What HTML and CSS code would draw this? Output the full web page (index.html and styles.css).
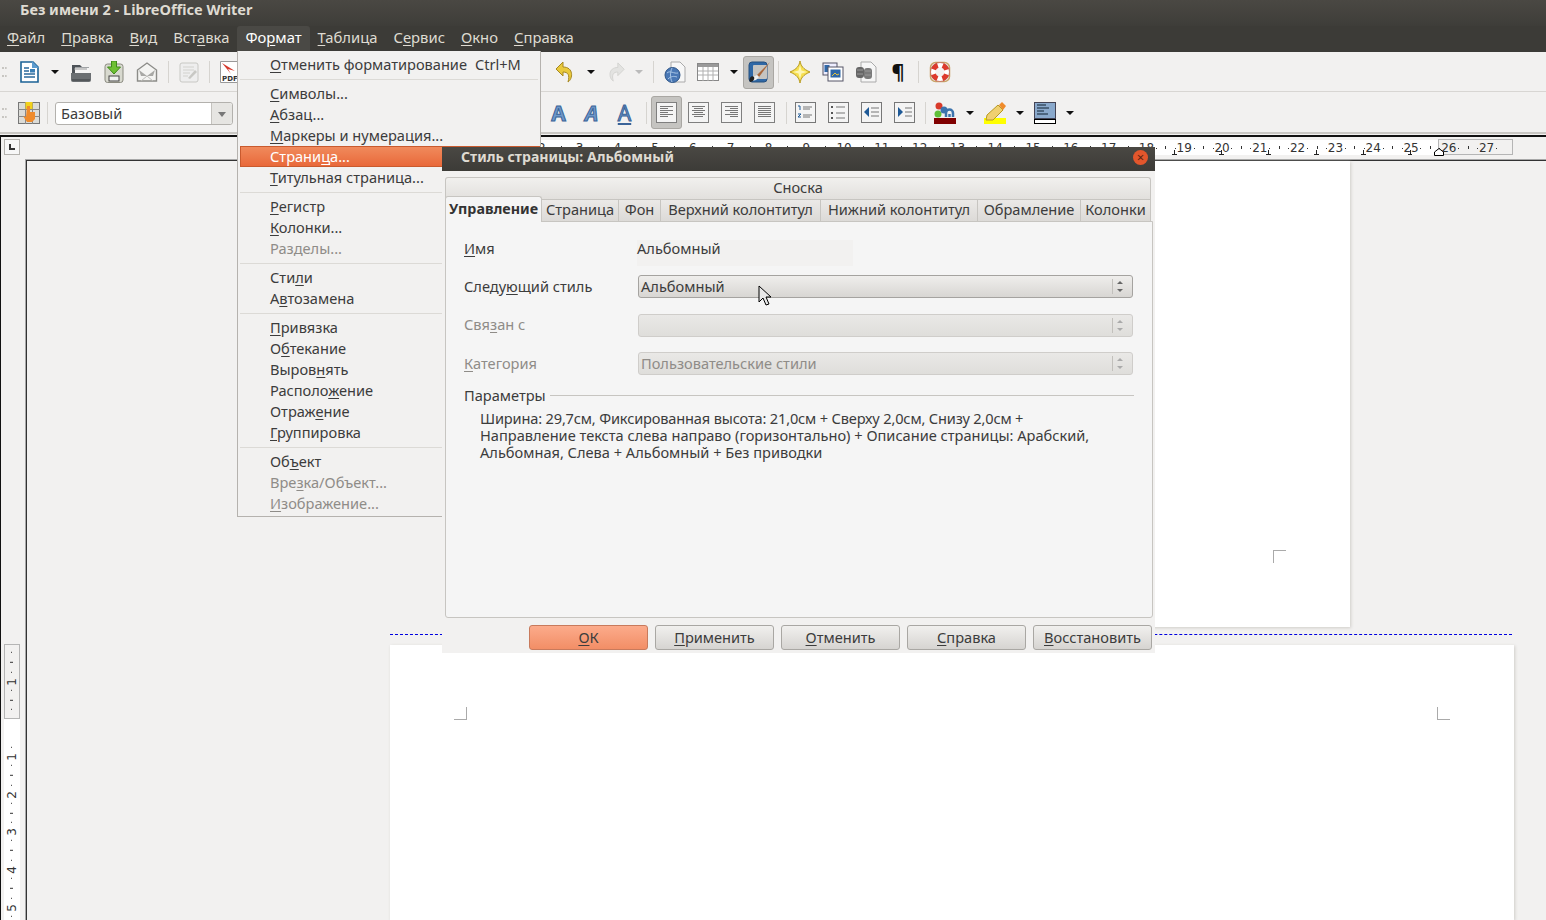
FILE: index.html
```html
<!DOCTYPE html>
<html>
    <head>
        <title>Без имени 2 - LibreOffice Writer</title>
        <link rel="stylesheet" href="styles.css">
    </head>
    <body>
        <div class="titlebar">Без имени 2 - LibreOffice Writer</div>
        <div class="menubar">
            <span class="menu-item"><u>Ф</u>айл</span>
            <span class="menu-item"><u>П</u>равка</span>
            <span class="menu-item"><u>В</u>ид</span>
            <span class="menu-item">Вст<u>а</u>вка</span>
            <span class="menu-item menu-open">Фо<u>р</u>мат</span>
            <span class="menu-item"><u>Т</u>аблица</span>
            <span class="menu-item">С<u>е</u>рвис</span>
            <span class="menu-item"><u>О</u>кно</span>
            <span class="menu-item"><u>С</u>правка</span>
        </div>

        <div class="toolbar toolbar-top">
            <span class="grip"></span>
            <svg class="ic" viewBox="0 0 22 22"><path d="M3 1h12l5 5v15H3z" fill="#fff" stroke="#1c6396" stroke-width="1.6"/><path d="M14 0l7 7h-7z" fill="#5d9ccf"/><path d="M6 7h5M6 10h5M6 13h11M6 16h11" stroke="#2a6a9c" stroke-width="1.4"/><rect x="12" y="8" width="5" height="3.5" fill="#3a7fb5"/></svg>
            <span class="drop"></span>
            <svg class="ic" viewBox="0 0 22 22"><path d="M2 4h8l2 2h7v7H2z" fill="#4d5257"/><rect x="5" y="6.500" width="14" height="6" fill="#f4f4f4"/><path d="M4 8h13" stroke="#999"/><path d="M1 12h20v7a2 2 0 0 1-2 2H3a2 2 0 0 1-2-2z" fill="#6b6f72"/><path d="M2 19h18" stroke="#3d4043"/></svg>
            <svg class="ic" viewBox="0 0 22 22"><rect x="2" y="3" width="18" height="18.500" rx="2.500" fill="#d8d9cf" stroke="#8b8b80"/><rect x="6" y="15" width="10" height="5" fill="#f2f2f2" stroke="#444"/><path d="M8.500 0h5v6h4l-6.500 7-6.500-7h4z" fill="#6ec034" stroke="#3f8a1b"/></svg>
            <svg class="ic" viewBox="0 0 22 22"><path d="M1.500 9L11 2l9.500 7v11h-19z" fill="#f4f4f2" stroke="#8c8c88" stroke-width="1.4"/><path d="M3 9l8 6 8-6-2 6H5z" fill="#a9a9a6"/><path d="M5 20l6-5 6 5" fill="none" stroke="#bdbdba"/></svg>
            <span class="sep"></span>
            <svg class="ic ic-faded" viewBox="0 0 20 22"><rect x="1" y="2" width="18" height="19" rx="2" fill="#eee" stroke="#c4c4c0"/><path d="M4 6h11M4 9h11M4 12h7M4 15h5" stroke="#d0d0cc"/><path d="M9 17l7-8 2 2-7 7z" fill="#c4c4c0"/></svg>
            <span class="sep"></span>
            <svg class="ic" viewBox="0 0 22 22"><path d="M.5.5h21v21H.5z" fill="#fff" stroke="#999"/><path d="M2 2l13 8-7-2 3 5z" fill="#d63a2e"/><text class="pdf-label" x="2" y="20">PDF</text></svg>
        </div>
        <div class="toolbar toolbar-top toolbar-right">
            <svg class="ic" viewBox="0 0 22 22"><path d="M9 1L2 8l7 7v-4c5 0 7 3 5 10 5-3 6-15-5-15z" fill="#e9c93c" stroke="#a58720"/></svg>
            <span class="drop"></span>
            <svg class="ic ic-faded" viewBox="0 0 22 22"><path d="M13 1l7 7-7 7v-4c-5 0-7 3-5 10-5-3-6-15 5-15z" fill="#e2e2e0" stroke="#cfcfcc"/></svg>
            <span class="drop drop-off"></span>
            <span class="sep"></span>
            <svg class="ic" viewBox="0 0 22 22"><path d="M7 1h9l5 5v15H7z" fill="#f7f7f7" stroke="#aaa"/><circle cx="8.500" cy="14" r="7.500" fill="#4a78b5" stroke="#2f5688"/><path d="M3 12c3-3 7 1 11 0M4 18c3-3 6-3 9-2M8 7c-2 4-2 10 0 14" stroke="#a9c6e6" fill="none"/></svg>
            <svg class="ic" viewBox="0 0 22 18"><rect x=".5" y=".5" width="21" height="17" fill="#fff" stroke="#888"/><rect x="1" y="1" width="20" height="3" fill="#9a9a9a"/><path d="M1 8h20M1 12h20M6 4v14M11 4v14M16 4v14" stroke="#b0b0b0"/></svg>
            <span class="drop"></span>
            <span class="ic-pressed"><svg class="ic" viewBox="0 0 22 22"><rect x="1" y="1" width="18" height="20" rx="3" fill="#2f68a6" stroke="#27507f"/><rect x="5" y="4" width="14" height="14" rx="1" fill="#c5c4c1"/><path d="M22 1L9 14l2 2z" fill="#a9683c"/><path d="M9 14l2 2-3 3-4 1 1-4z" fill="#eee"/><path d="M2 21c-2-4 2-7 4-5 1 2-1 5-4 5z" fill="#222"/></svg></span>
            <span class="sep"></span>
            <svg class="ic" viewBox="0 0 22 22"><path d="M11 0c1 5 3 8 10 11-7 3-9 6-10 11-1-5-3-8-10-11 7-3 9-6 10-11z" fill="#f6df4e" stroke="#b79a22"/><path d="M11 4l1.500 5.500L18 11l-5.500 1.500L11 18l-1.500-5.500L4 11l5.500-1.500z" fill="#fdf6b4"/></svg>
            <svg class="ic" viewBox="0 0 22 22"><rect x="1" y="2" width="14" height="12" fill="#eef" stroke="#556"/><rect x="2.500" y="4" width="5" height="7" fill="#2f68a8"/><rect x="6" y="6" width="15" height="14" fill="#fff" stroke="#556"/><rect x="8.500" y="8.500" width="10" height="8" fill="#2f68a8"/><path d="M10 15l3-3 2 2 2-1" stroke="#e8c53a" fill="none"/></svg>
            <svg class="ic" viewBox="0 0 22 22"><path d="M6 1h10l5 5v15H6z" fill="#f6f6f6" stroke="#aaa"/><rect x="1" y="6" width="8" height="11" rx="3" fill="#666"/><rect x="9" y="7" width="8" height="11" rx="3" fill="#7a7a7a"/><path d="M2 9h6M10 10h6M2 13h6M10 14h6" stroke="#999"/></svg>
            <span class="pilcrow">¶</span>
            <span class="sep"></span>
            <svg class="ic" viewBox="0 0 22 22"><rect x="1.500" y="1.500" width="19" height="19" rx="5" fill="none" stroke="#c9a468" stroke-width="1.5"/><circle cx="11" cy="11" r="7" fill="none" stroke="#fff" stroke-width="5"/><circle class="buoy-bands" cx="11" cy="11" r="7"/><circle cx="11" cy="11" r="9.500" fill="none" stroke="#b8423a" stroke-width=".6"/></svg>
        </div>

        <div class="toolbar toolbar-second">
            <span class="grip grip-low"></span>
            <svg class="ic" viewBox="0 0 22 22"><rect x=".5" y=".5" width="21" height="21" fill="#dcdcd8" stroke="#777"/><path d="M7.500 0v22M14.500 0v22M0 7.500h22M0 14.500h22" stroke="#888"/><rect x="7.500" y="0" width="7" height="7" fill="#f2d21c"/><path d="M9 4h3v6h5v7l-3 3H9l-4-6 3 1z" fill="#ef8b2c"/></svg>
            <span class="sep"></span>
            <div class="style-combo"><span class="style-value">Базовый</span><span class="style-arrow"></span></div>
        </div>
        <div class="toolbar toolbar-second toolbar-format">
            <span class="letter-a">A</span>
            <span class="letter-a letter-i">A</span>
            <span class="letter-a letter-u">A</span>
            <span class="sep"></span>
            <span class="ic-pressed pressed-align"><span class="align a-left"><i></i><i></i><i></i><i></i><i></i><i></i></span></span>
            <span class="align a-center"><i></i><i></i><i></i><i></i><i></i><i></i></span>
            <span class="align a-right"><i></i><i></i><i></i><i></i><i></i><i></i></span>
            <span class="align a-full"><i></i><i></i><i></i><i></i><i></i><i></i></span>
            <span class="sep sep-tight"></span>
            <svg class="ic ic-box" viewBox="0 0 21 21"><rect x=".5" y=".5" width="20" height="20" fill="#f4f4f4" stroke="#777"/><path d="M3 4h2v4M3 12h3l-3 3h3" fill="none" stroke="#1f5a97"/><path d="M8 5h9M8 7h7M8 13h9M8 15h7" stroke="#777"/></svg>
            <svg class="ic ic-box" viewBox="0 0 21 21"><rect x=".5" y=".5" width="20" height="20" fill="#f4f4f4" stroke="#777"/><path d="M3 4h2v2H3zM3 10h2v2H3zM3 15h2v2H3z" fill="#555"/><path d="M8 5h9M8 11h9M8 16h9" stroke="#777"/></svg>
            <svg class="ic ic-box" viewBox="0 0 21 21"><rect x=".5" y=".5" width="20" height="20" fill="#f4f4f4" stroke="#777"/><path d="M3 10l5-5v10z" fill="#1f5a97"/><path d="M10 6h8M10 10h8M10 14h8" stroke="#777"/></svg>
            <svg class="ic ic-box ic-last" viewBox="0 0 21 21"><rect x=".5" y=".5" width="20" height="20" fill="#f4f4f4" stroke="#777"/><path d="M9 10L4 5v10z" fill="#1f5a97"/><path d="M11 6h7M11 10h7M11 14h7" stroke="#777"/></svg>
            <span class="sep sep-tight"></span>
            <svg class="ic" viewBox="0 0 22 22"><circle cx="5" cy="4" r="3.500" fill="#d83a2a"/><circle cx="4" cy="12" r="3.500" fill="#5fc03a"/><circle cx="10" cy="8" r="3.500" fill="#3d74ad"/><path d="M12 15V11a3 3 0 0 1 7 0v4M15.500 15v-3" fill="none" stroke="#3d74ad" stroke-width="2.500"/><rect x="0" y="16" width="22" height="6" fill="#800000"/></svg>
            <span class="drop"></span>
            <svg class="ic" viewBox="0 0 22 22"><rect x="0" y="16" width="22" height="6" fill="#ff0"/><path d="M3 13L14 3l5 5L9 18H2z" fill="#f0d070" stroke="#b79a22"/><path d="M15 3l3-3 4 4-3 4z" fill="#ef8b2c"/></svg>
            <span class="drop"></span>
            <svg class="ic" viewBox="0 0 22 22"><rect x=".5" y=".5" width="21" height="16" fill="#8aa9cc" stroke="#445"/><path d="M3 3h9M3 6h12M3 9h7M3 12h11" stroke="#123"/><rect x=".5" y="17.500" width="21" height="4" fill="#fff" stroke="#000"/></svg>
            <span class="drop"></span>
        </div>

        <div class="ruler-row">
            <span class="corner"></span>
            <div class="h-ruler">
                <span class="h-margin"></span>
                <div class="h-cells">
                    <span>1</span><span>2</span><span>3</span><span>4</span><span>5</span><span>6</span><span>7</span><span>8</span><span>9</span>
                    <span>10</span><span>11</span><span>12</span><span>13</span><span>14</span><span>15</span><span>16</span><span>17</span><span>18</span>
                    <span>19</span><span>20</span><span>21</span><span>22</span><span>23</span><span>24</span><span>25</span><span>26</span><span>27</span>
                </div>
                <span class="tab-stops"></span>
                <svg class="indent-mark" viewBox="0 0 10 8"><path d="M.5 7.500V4L5 .5 9.500 4v3.500z" fill="#fff" stroke="#000"/></svg>
            </div>
        </div>

        <div class="workspace">
            <div class="v-ruler">
                <div class="v-margin">
                    <span class="v-cell"></span><span class="v-cell">1</span><span class="v-cell"></span>
                </div>
                <div class="v-band">
                    <span class="v-cell">1</span><span class="v-cell">2</span><span class="v-cell">3</span><span class="v-cell">4</span><span class="v-cell">5</span>
                </div>
            </div>
            <div class="canvas">
                <div class="page page-one"><span class="crop crop-one"></span></div>
                <div class="page-break"></div>
                <div class="page page-two">
                    <span class="crop crop-left"></span>
                    <span class="crop crop-right"></span>
                </div>
            </div>
        </div>

        <div class="format-menu">
            <div class="m-row m-shortcut"><span><u>О</u>тменить форматирование</span><span>Ctrl+M</span></div>
            <hr>
            <div class="m-row"><u>С</u>имволы...</div>
            <div class="m-row"><u>А</u>бзац...</div>
            <div class="m-row"><u>М</u>аркеры и нумерация...</div>
            <div class="m-row m-active">Страни<u>ц</u>а...</div>
            <div class="m-row"><u>Т</u>итульная страница...</div>
            <hr>
            <div class="m-row"><u>Р</u>егистр</div>
            <div class="m-row"><u>К</u>олонки...</div>
            <div class="m-row m-off">Разделы...</div>
            <hr>
            <div class="m-row">Сти<u>л</u>и</div>
            <div class="m-row">А<u>в</u>тозамена</div>
            <hr>
            <div class="m-row"><u>П</u>ривязка</div>
            <div class="m-row">О<u>б</u>текание</div>
            <div class="m-row">Выров<u>н</u>ять</div>
            <div class="m-row">Располо<u>ж</u>ение</div>
            <div class="m-row">Отраж<u>е</u>ние</div>
            <div class="m-row"><u>Г</u>руппировка</div>
            <hr>
            <div class="m-row">Об<u>ъ</u>ект</div>
            <div class="m-row m-off">Вре<u>з</u>ка/Объект...</div>
            <div class="m-row m-off"><u>И</u>зображение...</div>
        </div>

        <div class="dialog">
            <div class="dlg-title">
                <span>Стиль страницы: Альбомный</span>
                <span class="dlg-close">×</span>
            </div>
            <div class="dlg-body">
                <div class="tab-footnote">Сноска</div>
                <div class="tabs">
                    <span class="tab tab-on">Управление</span>
                    <span class="tab">Страница</span>
                    <span class="tab">Фон</span>
                    <span class="tab">Верхний колонтитул</span>
                    <span class="tab">Нижний колонтитул</span>
                    <span class="tab">Обрамление</span>
                    <span class="tab">Колонки</span>
                </div>
                <div class="tab-panel">
                    <div class="field field-name">
                        <span class="f-label"><u>И</u>мя</span>
                        <span class="f-name">Альбомный</span>
                    </div>
                    <div class="field">
                        <span class="f-label">Следу<u>ю</u>щий стиль</span>
                        <span class="f-select"><span>Альбомный</span><span class="spin"></span></span>
                    </div>
                    <div class="field field-off">
                        <span class="f-label">Свя<u>з</u>ан с</span>
                        <span class="f-select"><span></span><span class="spin"></span></span>
                    </div>
                    <div class="field field-off">
                        <span class="f-label"><u>К</u>атегория</span>
                        <span class="f-select"><span>Пользовательские стили</span><span class="spin"></span></span>
                    </div>
                    <div class="params-head"><span>Параметры</span><span class="params-line"></span></div>
                    <p class="params-text"><span class="params-first">Ширина: 29,7см, Фиксированная высота: 21,0см + Сверху 2,0см, Снизу 2,0см +</span><br>Направление текста слева направо (горизонтально) + Описание страницы: Арабский,<br>Альбомная, Слева + Альбомный + Без приводки</p>
                </div>
                <div class="dlg-buttons">
                    <span class="btn btn-ok"><u>О</u>К</span>
                    <span class="btn"><u>П</u>рименить</span>
                    <span class="btn"><u>О</u>тменить</span>
                    <span class="btn"><u>С</u>правка</span>
                    <span class="btn"><u>В</u>осстановить</span>
                </div>
            </div>
        </div>

        <svg class="cursor" viewBox="0 0 14 22"><path d="M1 1v16l4-4 3 7 3-1-3-7h5z" fill="#e8e8e8" stroke="#000"/></svg>
    </body>
</html>
```

FILE: styles.css
```css
html, body{
    margin: 0;
    height: 920px;
    overflow: hidden;
}

body{
    position: relative;
    width: 1546px;
    background-color: #f2f1f0;
    font-family: "Noto Sans", sans-serif;
    font-size: 14.6px;
    color: #3c3c3c;
}

u{
    text-underline-offset: 2px;
}

.titlebar{
    height: 26px;
    line-height: 19px;
    padding-left: 20px;
    background: linear-gradient(#4a4843, #3e3d39);
    color: #dfdbd2;
    font-weight: bold;
    font-size: 14.5px;
}

.menubar{
    display: flex;
    height: 26px;
    margin-left: -1px;
    background-color: #3c3b37;
    color: #dfdbd2;
}

.menu-item{
    padding: 0 8px;
    line-height: 23px;
    font-size: 14.8px;
}

.menu-open{
    background-color: #4a4945;
    border-radius: 3px 3px 0 0;
    color: #fff;
}

/* toolbars */
.toolbar{
    display: flex;
    align-items: center;
    position: absolute;
    left: 0;
    box-sizing: border-box;
    gap: 11px;
}

.toolbar-top{
    top: 52px;
    height: 40px;
    width: 1546px;
    padding-left: 2px;
    border-bottom: 1px solid #d8d6d3;
}

.toolbar-right{
    left: 554px;
    width: 992px;
    padding-left: 0;
}

.toolbar-second{
    top: 93px;
    height: 41px;
    width: 1546px;
    padding-left: 2px;
    gap: 8px;
    border-bottom: 2px solid #c9c7c3;
}

.toolbar-format{
    left: 548px;
    width: 998px;
    padding-left: 0;
    gap: 12px;
}

.grip{
    width: 5px;
    height: 10px;
    border-top: 2px dotted #c8c6c2;
    border-bottom: 2px dotted #c8c6c2;
    box-sizing: border-box;
}

.grip-low{
    margin-right: 3px;
}

.ic{
    width: 22px;
    height: 22px;
    flex: none;
}

.ic-faded{
    width: 20px;
    opacity: .9;
}

.ic-box{
    width: 21px;
    height: 21px;
}

.ic-last{
    margin-right: -1px;
}

.pdf-label{
    font-family: "DejaVu Sans", sans-serif;
    font-size: 7px;
    font-weight: bold;
    fill: #333;
}

.buoy-bands{
    fill: none;
    stroke: #dd3a2c;
    stroke-width: 5;
    stroke-dasharray: 6 5;
    stroke-dashoffset: -2.5;
}

.drop{
    flex: none;
    width: 0;
    height: 0;
    border-left: 4px solid transparent;
    border-right: 4px solid transparent;
    border-top: 4px solid #111;
}

.drop-off{
    border-top-color: #bbb;
    margin-left: -2px;
}

.toolbar-format .drop{
    margin: 0 -2px;
}

.sep{
    flex: none;
    width: 1px;
    height: 22px;
    margin: 0 -1px;
    background-color: #d6d4d0;
}

.toolbar-second > .sep:first-of-type{
    margin: 0;
}

.sep-tight{
    margin-right: -4px;
}

.ic-pressed{
    flex: none;
    display: flex;
    align-items: center;
    justify-content: center;
    width: 31px;
    height: 33px;
    margin: 1px -6px 0;
    border-radius: 3px;
    background-color: #c5c4c1;
    border: 1px solid #a9a7a3;
    box-sizing: border-box;
}

.pressed-align{
    margin: 0 -6px 0 -7px;
}

.pilcrow{
    width: 20px;
    font-size: 20px;
    font-weight: bold;
    color: #111;
    text-align: center;
}

.style-combo{
    display: flex;
    width: 178px;
    height: 23px;
    margin: 1px 0 0 0;
    border: 1px solid #b3b1ad;
    border-radius: 3px;
    background-color: #fff;
    box-sizing: border-box;
}

.style-value{
    flex: 1;
    padding-left: 5px;
    line-height: 20px;
}

.style-arrow{
    position: relative;
    width: 20px;
    border-left: 1px solid #c4c2be;
    background: #e6e5e2;
    border-radius: 0 3px 3px 0;
}

.style-arrow::after{
    content: "";
    position: absolute;
    left: 6px;
    top: 9px;
    border-left: 4px solid transparent;
    border-right: 4px solid transparent;
    border-top: 5px solid #777;
}

.letter-a{
    flex: none;
    width: 21px;
    text-align: center;
    font-size: 21px;
    line-height: 22px;
    font-weight: bold;
    color: #6f98c9;
    -webkit-text-stroke: 1px #3a6398;
}

.letter-i{
    font-style: italic;
}

.letter-u{
    font-weight: normal;
    text-decoration: underline;
}

.align{
    flex: none;
    display: flex;
    flex-direction: column;
    gap: 1px;
    width: 21px;
    height: 21px;
    padding: 3px;
    box-sizing: border-box;
    background-color: #f4f4f4;
    border: 1px solid #7f7f7f;
}

.align i{
    display: block;
    height: 1px;
    background-color: #777;
}

.a-left i:nth-child(even){
    width: 65%;
}

.a-center i:nth-child(even){
    width: 65%;
    margin: 0 auto;
}

.a-right i:nth-child(even){
    width: 65%;
    margin-left: auto;
}

/* rulers */
.ruler-row{
    position: absolute;
    top: 135px;
    left: 0;
    width: 1546px;
    height: 24px;
    border-top: 2px solid #111;
    border-left: 1px solid #111;
    box-sizing: border-box;
}

.corner{
    position: absolute;
    left: 3px;
    top: 2px;
    width: 16px;
    height: 16px;
    background-color: #f7f7f7;
    border: 1px solid #b5b3af;
    box-sizing: border-box;
}

.corner::after{
    content: "";
    position: absolute;
    left: 4px;
    top: 4px;
    width: 4px;
    height: 4px;
    border-left: 2px solid #333;
    border-bottom: 2px solid #333;
}

.h-ruler{
    position: absolute;
    left: 389px;
    top: 3px;
    width: 1123px;
    height: 15px;
    background-color: #fff;
}

.h-margin{
    position: absolute;
    right: 0;
    top: -1px;
    width: 75px;
    height: 16px;
    background-color: #f2f1f0;
    border: 1px solid #b5b5b5;
    box-sizing: border-box;
}

.h-cells{
    position: absolute;
    left: 95px;
    top: 0;
    display: flex;
    font-family: "DejaVu Sans", sans-serif;
    font-size: 12px;
    line-height: 16px;
    color: #333;
}

.h-cells span{
    flex: none;
    width: 37.8px;
    text-align: center;
    background:
        linear-gradient(#333, #333) 0 6px / 1px 3px no-repeat,
        linear-gradient(#333, #333) 9.5px 8px / 1px 1px no-repeat,
        linear-gradient(#333, #333) 28.3px 8px / 1px 1px no-repeat;
}

.tab-stops{
    position: absolute;
    left: 782px;
    bottom: 0;
    width: 240px;
    height: 5px;
    background:
        repeating-linear-gradient(90deg, transparent 0 2px, #222 2px 3px, transparent 3px 47.2px) 0 0 / 100% 4px no-repeat,
        repeating-linear-gradient(90deg, #222 0 5px, transparent 5px 47.2px) 0 100% / 100% 1px no-repeat;
}

.indent-mark{
    position: absolute;
    left: 1044px;
    top: 8px;
    width: 10px;
    height: 8px;
}

.workspace{
    position: absolute;
    top: 159px;
    left: 0;
    display: flex;
    width: 1546px;
    height: 761px;
}

.v-ruler{
    position: relative;
    flex: none;
    width: 25px;
    border-left: 1px solid #111;
    box-sizing: border-box;
    font-family: "DejaVu Sans", sans-serif;
    font-size: 12px;
    color: #333;
}

.v-margin{
    position: absolute;
    top: 485px;
    left: 3px;
    display: flex;
    flex-direction: column;
    justify-content: center;
    width: 16px;
    height: 75px;
    border: 1px solid #b5b5b5;
    box-sizing: border-box;
    overflow: hidden;
}

.v-band{
    position: absolute;
    top: 560px;
    left: 3px;
    width: 16px;
    height: 201px;
    padding-top: 18.9px;
    background-color: #fff;
    box-sizing: border-box;
}

.v-cell{
    display: block;
    flex: none;
    width: 14px;
    height: 37.8px;
    line-height: 14px;
    text-align: center;
    writing-mode: vertical-rl;
    transform: rotate(180deg);
    background:
        linear-gradient(#333, #333) 6px 0 / 3px 1px no-repeat,
        linear-gradient(#333, #333) 7px 9.5px / 1px 1px no-repeat,
        linear-gradient(#333, #333) 7px 28.3px / 1px 1px no-repeat;
}

.v-band .v-cell{
    width: 16px;
    line-height: 16px;
    background-position: 7px 0, 8px 9.5px, 8px 28.3px;
}

/* document pages */
.canvas{
    position: relative;
    flex: 1;
    border-top: 1px solid #a8a8a8;
    border-left: 1px solid #a8a8a8;
    box-shadow: inset 1px 1px #333;
}

.page{
    position: absolute;
    background-color: #fff;
    box-shadow: 1px 1px 3px #cfcdc9;
}

.page-one{
    left: 1074px;
    top: 1px;
    width: 250px;
    height: 466px;
}

.page-two{
    left: 364px;
    top: 485px;
    width: 1124px;
    height: 275px;
}

.page-break{
    position: absolute;
    left: 364px;
    top: 474px;
    width: 1122px;
    border-top: 1px dashed #0000e0;
}

.crop{
    position: absolute;
    width: 13px;
    height: 13px;
    border: 0 solid #aaa;
    box-sizing: border-box;
}

.crop-one{
    left: 173px;
    top: 389px;
    border-top-width: 1px;
    border-left-width: 1px;
}

.crop-left{
    left: 64px;
    top: 62px;
    border-right-width: 1px;
    border-bottom-width: 1px;
}

.crop-right{
    left: 1047px;
    top: 62px;
    border-left-width: 1px;
    border-bottom-width: 1px;
}

/* format menu */
.format-menu{
    position: absolute;
    left: 237px;
    top: 51px;
    width: 304px;
    height: 466px;
    padding-top: 3px;
    box-sizing: border-box;
    background-color: #f2f1f0;
    border: 1px solid #b5b2ae;
    border-top: 0;
}

.format-menu hr{
    margin: 4px 2px 3px;
    border: 0;
    border-top: 1px solid #dcdad6;
}

.m-row{
    height: 21px;
    line-height: 21px;
    margin-left: 2px;
    padding-left: 30px;
}

.m-shortcut{
    display: flex;
    gap: 8px;
}

.m-active{
    background: linear-gradient(#f08a5c, #e9693a);
    color: #fff;
    border: 1px solid #c95a2e;
    box-sizing: border-box;
    padding-left: 29px;
    line-height: 19px;
}

.m-off{
    color: #8f8c88;
}

/* dialog */
.dialog{
    position: absolute;
    left: 442px;
    top: 147px;
    width: 713px;
}

.dlg-title{
    display: flex;
    justify-content: space-between;
    height: 24px;
    line-height: 20px;
    padding: 0 7px 0 19px;
    background: linear-gradient(#4a4843, #3c3b37);
    color: #dfdbd2;
    font-weight: bold;
    font-size: 14.1px;
}

.dlg-close{
    width: 15px;
    height: 15px;
    margin-top: 3px;
    border-radius: 50%;
    background-color: #e2562c;
    color: #5b2412;
    font-size: 13px;
    font-weight: normal;
    line-height: 14px;
    text-align: center;
}

.dlg-body{
    height: 482px;
    padding: 6px 2px 0 3px;
    box-sizing: border-box;
    background-color: #f2f1f0;
}

.tab-footnote{
    height: 22px;
    line-height: 18px;
    text-align: center;
    margin-right: 2px;
    background: linear-gradient(#f1f0ee, #e2e0dd);
    border: 1px solid #c7c5c1;
    border-bottom: 0;
    border-radius: 3px 3px 0 0;
    box-sizing: border-box;
}

.tabs{
    display: grid;
    grid-template-columns: 97px 77px 42px 160px 157px 103px 70px;
    grid-template-rows: 22px;
    align-items: end;
    height: 22px;
}

.tab{
    position: relative;
    height: 22px;
    line-height: 19px;
    text-align: center;
    background: linear-gradient(#ebe9e7, #dcdad7);
    border: 1px solid #c7c5c1;
    border-bottom: 0;
    border-left: 0;
    box-sizing: border-box;
    white-space: nowrap;
}

.tab-on{
    z-index: 1;
    height: 26px;
    margin-bottom: -1px;
    line-height: 24px;
    background: #f5f5f5;
    border-left: 1px solid #c7c5c1;
    border-radius: 3px 3px 0 0;
    font-weight: bold;
    font-size: 14.3px;
    color: #333;
}

.tab-panel{
    height: 397px;
    background-color: #f5f5f5;
    border: 1px solid #c7c5c1;
    border-radius: 0 0 3px 3px;
    padding: 18px 18px 0;
    box-sizing: border-box;
}

.field{
    display: flex;
    align-items: center;
    height: 23px;
    margin-bottom: 15.5px;
}

.field-name{
    align-items: flex-start;
    height: 26px;
    margin-bottom: 9px;
    line-height: 17px;
}

.f-label{
    width: 174px;
    margin-top: -2px;
}

.field-name .f-label{
    margin-top: 0;
}

.f-name{
    width: 216px;
    height: 26px;
    margin-left: -1px;
    background-color: #f2f1f0;
}

.f-select{
    display: flex;
    justify-content: space-between;
    width: 495px;
    height: 23px;
    line-height: 21px;
    padding-left: 2px;
    border: 1px solid #a5a3a0;
    border-radius: 3px;
    background: linear-gradient(#efeeec, #d8d6d3);
    box-sizing: border-box;
}

.spin{
    position: relative;
    width: 19px;
    margin: 3px 0;
    border-left: 1px solid #c2c0bc;
}

.spin::before, .spin::after{
    content: "";
    position: absolute;
    left: 4px;
    border-left: 3px solid transparent;
    border-right: 3px solid transparent;
}

.spin::before{
    top: 2px;
    border-bottom: 3px solid #666;
}

.spin::after{
    bottom: 2px;
    border-top: 3px solid #666;
}

.field-off .f-label{
    color: #8f8c88;
}

.field-off .f-select{
    color: #8f8c88;
    border-color: #cfcdca;
    background: linear-gradient(#e9e8e6, #dfdedb);
}

.field-off .spin::before{
    border-bottom-color: #aaa;
}

.field-off .spin::after{
    border-top-color: #aaa;
}

.params-head{
    display: flex;
    align-items: center;
    gap: 4px;
    margin-top: -5.5px;
}

.params-line{
    flex: 1;
    border-top: 1px solid #c7c5c1;
}

.params-text{
    margin: 5px 0 0 16px;
    line-height: 17px;
    white-space: nowrap;
}

.params-first{
    letter-spacing: -.17px;
}

.dlg-buttons{
    display: flex;
    justify-content: flex-end;
    gap: 7px;
    padding: 7px 1px 0 0;
}

.btn{
    width: 119px;
    height: 25px;
    line-height: 23px;
    text-align: center;
    border: 1px solid #a9a7a3;
    border-radius: 3px;
    background: linear-gradient(#f1f0ee, #d6d4d1);
    box-sizing: border-box;
}

.btn-ok{
    background: linear-gradient(#fcab8b, #f28e66);
    border-color: #c87a5c;
}

.cursor{
    position: absolute;
    left: 758px;
    top: 285px;
    width: 14px;
    height: 22px;
}
```
